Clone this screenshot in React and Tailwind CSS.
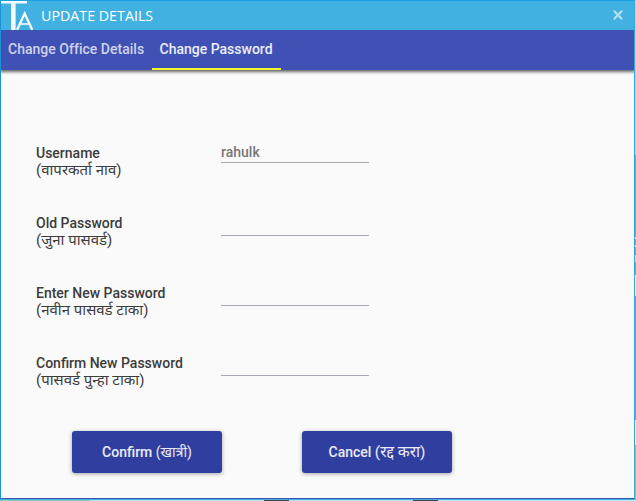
const fields = [
  { label: "Username", hint: "(वापरकर्ता नाव)", value: "rahulk" },
  { label: "Old Password", hint: "(जुना पासवर्ड)", value: "" },
  { label: "Enter New Password", hint: "(नवीन पासवर्ड टाका)", value: "" },
  { label: "Confirm New Password", hint: "(पासवर्ड पुन्हा टाका)", value: "" },
];

function Logo() {
  return (
    <svg className="h-[29px] w-8 shrink-0" viewBox="0 0 32 29" fill="none" stroke="#f4fbfe">
      <path d="M0 1.2H26" strokeWidth="2.6" />
      <path d="M12.3 1V29" strokeWidth="4.6" />
      <path d="M16 29L23.7 12.5L31.3 29" strokeWidth="2.3" />
      <path d="M19 23H28.5" strokeWidth="1.6" />
    </svg>
  );
}

function ActionButton({ label, hint, hintClass }) {
  return (
    <button className="h-[42px] w-[150px] rounded-[3px] bg-[#303f9f] text-sm leading-5 font-medium whitespace-nowrap text-white/90 shadow-[0_1px_4px_rgba(0,0,0,0.35)]">
      {label} <span className={hintClass}>{hint}</span>
    </button>
  );
}

export default function App() {
  return (
    <div className="relative flex h-[501px] w-[636px] flex-col overflow-hidden bg-[#b5e0ec] font-['Roboto','Noto_Sans_Devanagari','Noto_Sans',sans-serif]">
      <div className="flex shrink-0">
        <div className="flex h-[500px] w-[635px] flex-col border border-t-[#1ba1e2] border-r-[#2fa9e0] border-b-[#41b1e1] border-l-[#1995d3] bg-[#fafafa]">
          <header className="relative z-10 flex h-[29px] shrink-0 items-start bg-[#41b1e1] text-white">
            <Logo />
            <h1 className="ml-2 pt-1 font-['Open_Sans'] text-[15px] leading-[21px] font-normal">
              <span className="inline-block origin-left scale-x-[0.95] whitespace-nowrap">UPDATE DETAILS</span>
            </h1>
            <svg className="mt-[9px] mr-[11px] ml-auto h-[10px] w-[10px]" viewBox="0 0 10 10" stroke="#b3dff3" strokeWidth="2.2">
              <path d="M0.8 0.8L9.2 9.2M9.2 0.8L0.8 9.2" />
            </svg>
          </header>
          <nav className="flex h-10 shrink-0 bg-[#3f51b5] text-sm font-medium shadow-[0_1px_3px_1px_rgba(0,0,0,0.6)] [clip-path:inset(0_0_-8px_0)]">
            <div className="w-[151px] pt-[9px] pl-[7px] tracking-[0.02px] whitespace-nowrap text-white/75">Change Office Details</div>
            <div className="w-[129px] border-b-2 border-[#f5f52e] pt-[9px] pl-[7.5px] whitespace-nowrap text-white/90">Change Password</div>
          </nav>
          <main className="flex grow flex-col border-b border-[#3f51b5] pt-[75px] pl-[35px] text-sm text-[#3c3c3c]">
            {fields.map((f, i) => (
              <div key={f.label} className="flex h-[70px]">
                <label className="w-[185px] leading-[17px]">
                  <span className="block font-medium">{f.label}</span>
                  <span className="block text-[15px] leading-[17px]">{f.hint}</span>
                </label>
                <div className={i === 0 ? "h-[18px] w-[148px] border-b border-[#a9a9a9] leading-[14px] font-medium text-[#777]" : "h-[21px] w-[148px] border-b border-[#a9a9b4]"}>{f.value}</div>
              </div>
            ))}
            <div className="mt-[6px] ml-9 flex gap-20">
              <ActionButton label="Confirm" hint="(खात्री)" hintClass="font-normal" />
              <ActionButton label="Cancel" hint="(रद्द करा)" hintClass="text-[15.5px] leading-5 font-normal" />
            </div>
          </main>
        </div>
        <div className="flex w-px flex-col">
          <div className="h-[155px] bg-[#a5def5]" />
          <div className="h-[82px] bg-[#6fc030]" />
          <div className="h-[2px] bg-white" />
          <div className="h-[6px] bg-[#6fc030]" />
          <div className="h-[2px] bg-white" />
          <div className="h-[8px] bg-[#6fc030]" />
          <div className="h-[7px] bg-[#c5e8d8]" />
          <div className="h-[13px] bg-[#6fc030]" />
          <div className="h-[21px] bg-white" />
          <div className="h-[124px] bg-[#7f93c8]" />
          <div className="h-[25px] bg-white" />
          <div className="grow bg-[#9ccb30]" />
        </div>
      </div>
      <div className="flex h-px">
        <div className="w-[90px] bg-[#8cc8b4]" />
        <div className="w-[174px] bg-[#b5e4ec]" />
        <div className="w-[25px] bg-[#42434a]" />
        <div className="w-[124px] bg-[#b5e4ec]" />
        <div className="w-[25px] bg-[#42434a]" />
        <div className="grow bg-[#b5e8f5]" />
      </div>
    </div>
  );
}
